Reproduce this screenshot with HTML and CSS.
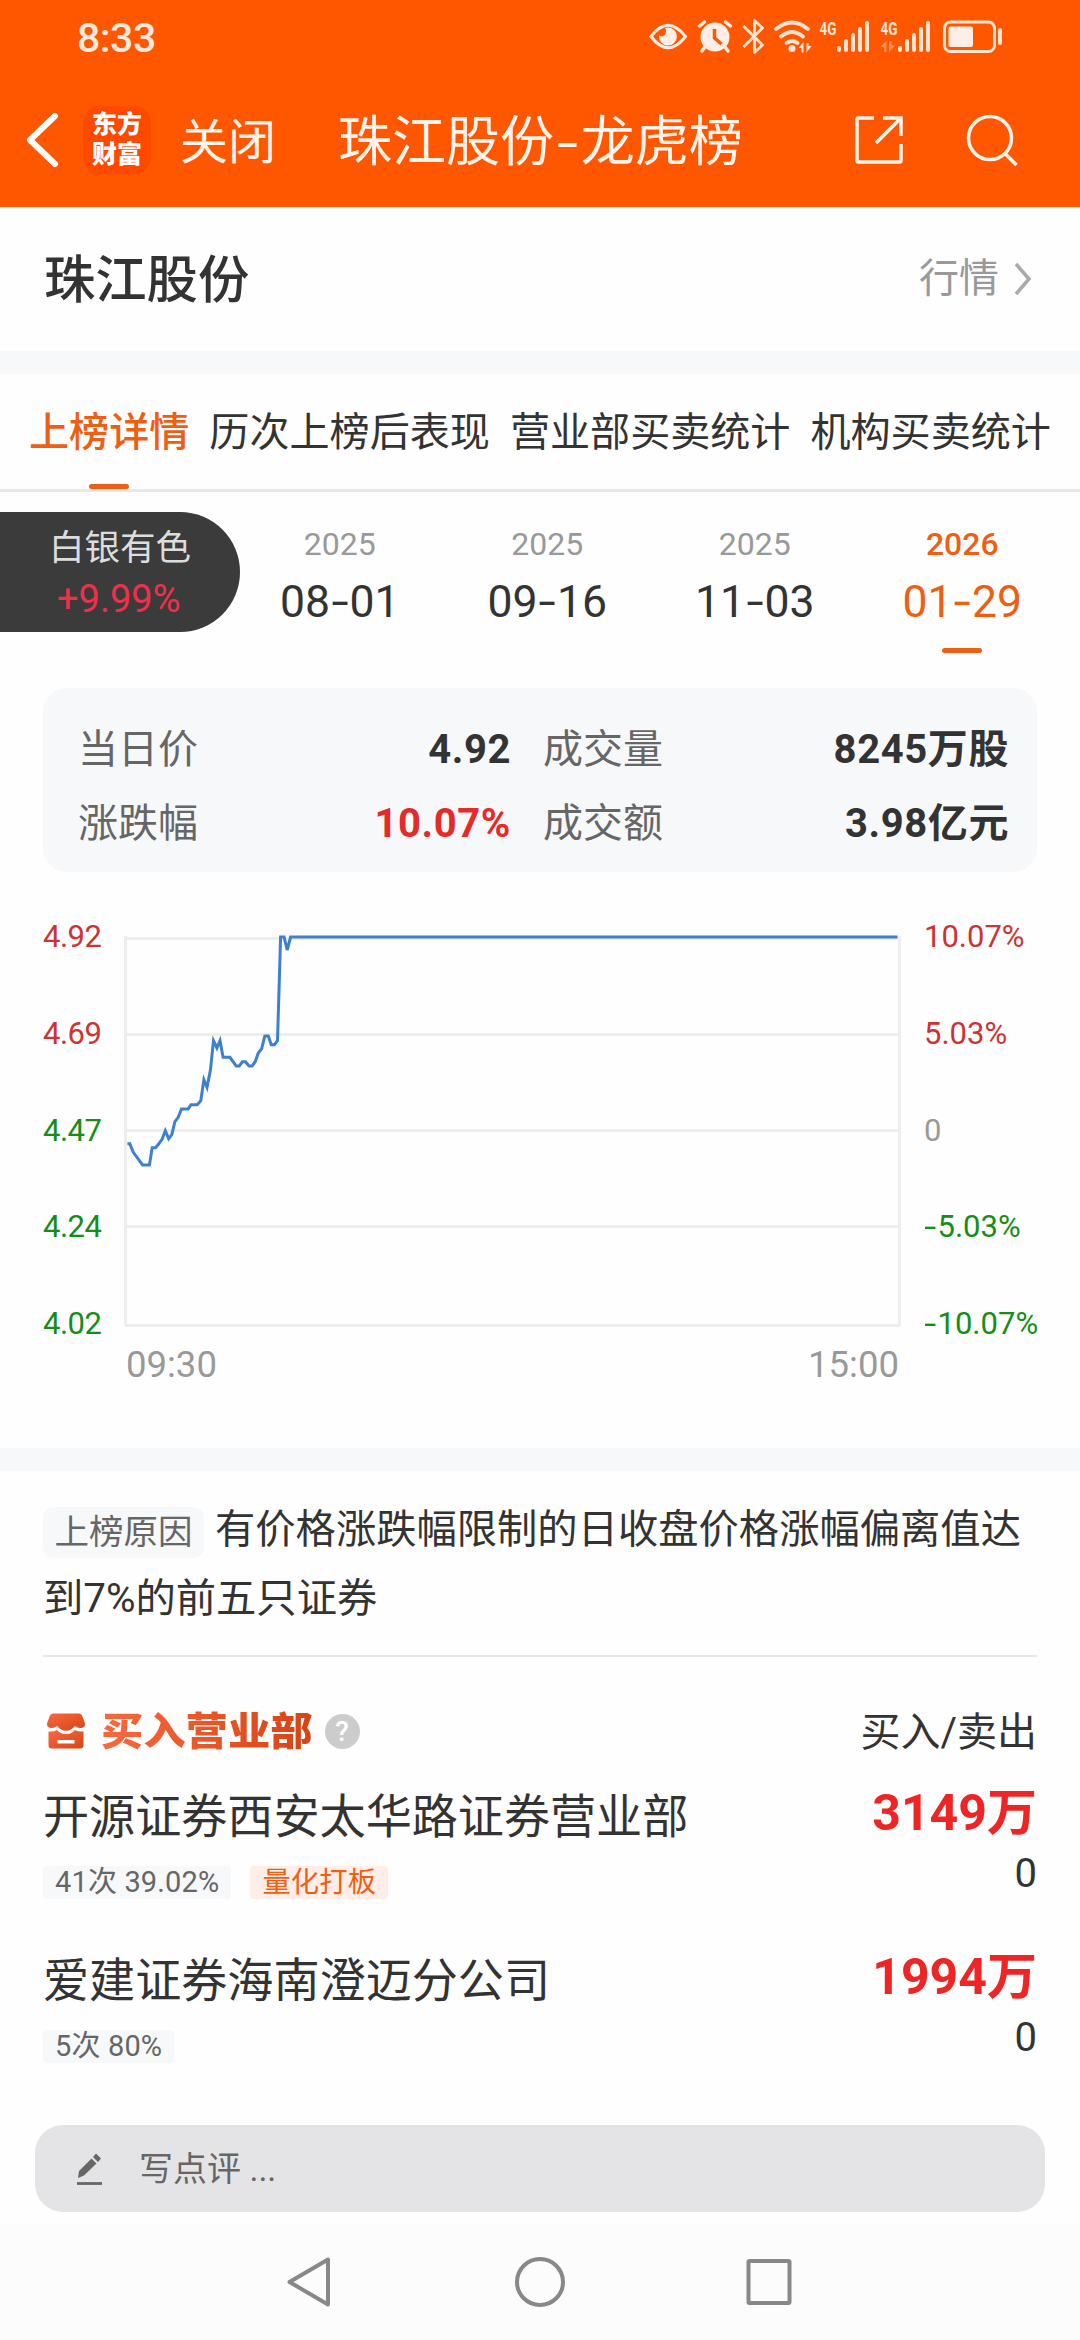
FILE: index.html
```html
<!DOCTYPE html>
<html lang="zh-CN">
<head>
  <meta charset="UTF-8" />
  <meta name="viewport" content="width=device-width, initial-scale=1.0"/>
  <title>珠江股份-龙虎榜</title>
  <link rel="stylesheet" href="styles.css">
</head>
<body>

  <header class="header">
    <div class="status-bar">
      <span class="time">8:33</span>
      <svg class="status-icons" viewBox="645 15 360 42" width="360" height="42">
        <!-- eye -->
        <path d="M650 36.500Q667 14 684.500 36.500Q667 59 650 36.500Z" fill="none" stroke="#ffeee5" stroke-width="3"/>
        <path d="M667 27.500a9 9 0 1 1-9 8c3 2 7 0 7-4 0-2-.5-3-1-3.500z" fill="#ffeee5"/>
        <!-- alarm -->
        <circle cx="714" cy="37" r="14.500" fill="#ffeee5"/>
        <path d="M698.500 26l5-4M729.500 26l-5-4M704 47l-3 4M724 47l3 4" stroke="#ffeee5" stroke-width="3.500" stroke-linecap="round"/>
        <path d="M713.500 29v9l7 6" fill="none" stroke="#ff5600" stroke-width="3.500"/>
        <!-- bluetooth -->
        <path d="M742.500 26l19 19-8 7.500V20.500l8 7.500-19 19" fill="none" stroke="#ffe4d2" stroke-width="2.800" stroke-linejoin="round"/>
        <!-- wifi -->
        <path d="M775 29q16-13 32 0M780 36.500q11-9 22 0M785.500 43q5.500-4 11 0" fill="none" stroke="#ffe4d2" stroke-width="3.800" stroke-linecap="round"/>
        <circle cx="791" cy="48.500" r="3.500" fill="#ffe4d2"/>
        <path d="M797.500 48l5-6v10.500h-2V48zM810.500 46l-5 6.500V43h2v3z" fill="#ffe4d2"/>
        <!-- signal 1 -->
        <text x="818.500" y="35" class="net" textLength="17" lengthAdjust="spacingAndGlyphs">4G</text>
        <path d="M838 48v2M845 41v9M852 35v15M859 29v21M866 23v27" stroke="#ffe4d2" stroke-width="4" stroke-linecap="round"/>
        <!-- signal 2 -->
        <text x="879.500" y="35" class="net" textLength="17" lengthAdjust="spacingAndGlyphs">4G</text>
        <path d="M879.500 47l6-6.500V52h-2.500v-5zM894 45.500l-6 6.500V41h2.500v4.500z" fill="#ff9360"/>
        <path d="M899 48v2M906 41v9M913 35v15M920 29v21M927 23v27" stroke="#ffe4d2" stroke-width="4" stroke-linecap="round"/>
        <!-- battery -->
        <rect x="943.500" y="22" width="50" height="29.500" rx="6" fill="none" stroke="#ffe4d2" stroke-width="3"/>
        <rect x="947.500" y="26.500" width="24.500" height="20.500" rx="2" fill="#ffeee5"/>
        <path d="M999 30v13" stroke="#ffe4d2" stroke-width="4" stroke-linecap="round"/>
      </svg>
    </div>
    <div class="title-bar">
      <svg class="back" viewBox="0 0 36 56" width="36" height="56">
        <path d="M30 4L5 28l25 24" fill="none" stroke="#fff" stroke-width="6" stroke-linecap="round" stroke-linejoin="round"/>
      </svg>
      <div class="logo"><span>东方</span><span>财富</span></div>
      <span class="close">关闭</span>
      <h1 class="title">珠江股份<i class="dash">-</i>龙虎榜</h1>
      <svg class="share" viewBox="0 0 50 50" width="50" height="50" fill="none" stroke="#fff3ec" stroke-width="3.500">
        <path d="M20 3H4.500Q3 3 3 4.500V45.500Q3 47 4.500 47H45.500Q47 47 47 45.500V29M29 3h18v18M47 3L22 28"/>
      </svg>
      <svg class="search" viewBox="0 0 54 54" width="54" height="54" fill="none" stroke="#fff3ec" stroke-width="3.500">
        <circle cx="24" cy="25" r="21.500"/>
        <path d="M38.500 40l12 12"/>
      </svg>
    </div>
  </header>

  <section class="stock">
    <h2>珠江股份</h2>
    <a class="quote">行情
      <svg viewBox="0 0 20 34" width="20" height="34"><path d="M3 2l13 15L3 32" fill="none" stroke="#aaa" stroke-width="3.500"/></svg>
    </a>
  </section>

  <div class="divider"></div>

  <nav class="tabs">
    <a class="tab active">上榜详情</a>
    <a class="tab">历次上榜后表现</a>
    <a class="tab">营业部买卖统计</a>
    <a class="tab">机构买卖统计</a>
  </nav>

  <section class="dates">
    <div class="floating">
      <span class="floating-name">白银有色</span>
      <span class="floating-rate">+9.99%</span>
    </div>
    <div class="date"><small>2025</small><b>08<i class="dash">-</i>01</b></div>
    <div class="date"><small>2025</small><b>09<i class="dash">-</i>16</b></div>
    <div class="date"><small>2025</small><b>11<i class="dash">-</i>03</b></div>
    <div class="date active"><small>2026</small><b>01<i class="dash">-</i>29</b></div>
  </section>

  <section class="summary">
    <div class="item"><span>当日价</span><b>4.92</b></div>
    <div class="item"><span>成交量</span><b>8245万股</b></div>
    <div class="item"><span>涨跌幅</span><b class="red">10.07%</b></div>
    <div class="item"><span>成交额</span><b>3.98亿元</b></div>
  </section>

  <section class="chart">
    <div class="axis price">
      <span class="up">4.92</span>
      <span class="up">4.69</span>
      <span class="down">4.47</span>
      <span class="down">4.24</span>
      <span class="down">4.02</span>
    </div>
    <div class="plot">
      <svg viewBox="0 0 777 394" width="777" height="394" fill="none">
        <path d="M1.500 2V391.500M775.500 2V391.500M1 4.500H776M1 100.500H776M1 196.500H776M1 292.500H776M1 391.500H776" stroke="#ededed" stroke-width="3"/>
        <polyline stroke="#3c80cf" stroke-width="3" points="3.400,209.700 5.800,209.700 9.300,218.300 18.600,231 25.400,231 28.200,213.700 31.600,213.700 34.400,210.300 38.200,205 41.300,196.700 44.700,204.700 47.800,200.700 50.900,187.700 54,183.700 57.500,175 64,175 67.100,170.700 73.300,170.700 76.800,166.700 79.900,145.700 83,153.300 86.400,136.300 89.500,106.700 92.900,114 96,106.700 99.100,123.300 106,123.300 112.200,132 115.300,132 118.400,127.700 121.500,127.700 125,132 128.100,132 131.200,127.700 134.300,119 137.700,114.700 140.800,102 144.300,102 147.300,110.700 150.500,110.700 153.500,106.700 156.600,3 160.100,3 163.200,16 166.600,3 773.500,3"/>
      </svg>
      <div class="times"><span>09:30</span><span>15:00</span></div>
    </div>
    <div class="axis percent">
      <span class="up">10.07%</span>
      <span class="up">5.03%</span>
      <span class="flat">0</span>
      <span class="down"><i class="dash">-</i>5.03%</span>
      <span class="down"><i class="dash">-</i>10.07%</span>
    </div>
  </section>

  <div class="divider"></div>

  <section class="detail">
    <p class="reason"><span class="reason-tag">上榜原因</span>有价格涨跌幅限制的日收盘价格涨幅偏离值达到7%的前五只证券</p>

    <div class="list-head">
      <svg class="shop" viewBox="0 0 40 36" width="40" height="36">
        <defs>
          <linearGradient id="shop" x1="0" y1="0" x2="1" y2="1">
            <stop offset="0" stop-color="#f76a45"/>
            <stop offset="1" stop-color="#d94312"/>
          </linearGradient>
        </defs>
        <path d="M7 .5H33Q35.500 .5 36.300 3L39 10.500Q39.500 14 35.500 15Q32 15.500 29 13Q24 18.500 20 17.500Q16 18.500 11 13Q8 15.500 4.500 15Q.5 14 1 10.500L3.700 3Q4.500 .5 7 .5Z" fill="url(#shop)"/>
        <path d="M2.500 18.500Q8 19 11 17Q15 21.500 20 21Q25 21.500 29 17Q32 19 37.500 18.500V32Q37.500 35.500 34 35.500H6Q2.500 35.500 2.500 32ZM11.500 27v3.500h17V27z" fill="url(#shop)" fill-rule="evenodd"/>
      </svg>
      <h3>买入营业部</h3>
      <span class="help">?</span>
      <span class="head-right">买入/卖出</span>
    </div>

    <div class="row">
      <div class="row-left">
        <div class="name">开源证券西安太华路证券营业部</div>
        <div class="tags"><span class="tag">41次 39.02%</span><span class="tag hot">量化打板</span></div>
      </div>
      <div class="row-right">
        <span class="buy">3149万</span>
        <span class="sell">0</span>
      </div>
    </div>
    <div class="row">
      <div class="row-left">
        <div class="name">爱建证券海南澄迈分公司</div>
        <div class="tags"><span class="tag">5次 80%</span></div>
      </div>
      <div class="row-right">
        <span class="buy">1994万</span>
        <span class="sell">0</span>
      </div>
    </div>
  </section>

  <div class="comment">
    <svg viewBox="0 0 28 34" width="28" height="34">
      <path d="M2 26l1-7L15.500 6.500l5 5L8 23.500zM17 5l3-3.500 5 5L22 10z" fill="#666"/>
      <path d="M1 31.500h25" stroke="#666" stroke-width="2.800"/>
    </svg>
    <span>写点评 ...</span>
  </div>

  <footer class="sys-nav">
    <svg viewBox="280 2252 520 60" width="520" height="60" fill="none" stroke="#888" stroke-width="4" stroke-linejoin="round">
      <path d="M328 2259.500V2304.500L289.500 2282Z"/>
      <circle cx="540" cy="2282" r="23"/>
      <rect x="748.500" y="2261" width="41" height="42" rx="1"/>
    </svg>
  </footer>

</body>
</html>
```
FILE: styles.css
```css
* {
  box-sizing: border-box;
}
body {
  margin: 0;
  width: 1080px;
  height: 2340px;
  overflow: hidden;
  display: flex;
  flex-direction: column;
  background: #fefefe;
  color: #333;
  font-family: Roboto, "Noto Sans CJK SC", sans-serif;
  font-size: 40px;
  line-height: 1;
}
h1, h2, h3, p {
  margin: 0;
}
.dash {
  display: inline-block;
  font-style: normal;
  transform: scaleX(1.4);
  margin: 0 0.08em;
}

/* header */
.header {
  height: 207px;
  flex: none;
  background: #ff5600;
  color: #fff3ec;
}
.status-bar {
  display: flex;
  justify-content: space-between;
  padding: 15px 74px 0 77px;
  height: 78px;
}
.time {
  font-size: 41px;
  line-height: 47px;
  font-weight: 500;
  color: #ffe9dd;
  letter-spacing: -0.5px;
}
.net {
  font-size: 19px;
  font-weight: 700;
  fill: #ffe4d2;
}
.title-bar {
  display: flex;
  align-items: center;
  height: 124px;
  padding: 0 60px 0 25px;
}
.logo {
  width: 68px;
  height: 68px;
  margin-left: 22px;
  border-radius: 17px;
  background: #ff4800;
  color: #fff;
  display: flex;
  flex-direction: column;
  align-items: center;
  justify-content: center;
  font-size: 25px;
  font-weight: 900;
  line-height: 30px;
}
.close {
  margin-left: 29px;
  padding-top: 5px;
  font-size: 48px;
  line-height: 60px;
}
.title {
  margin-left: 62px;
  padding-top: 6px;
  width: 402px;
  font-size: 54px;
  line-height: 64px;
  font-weight: 400;
  white-space: nowrap;
}
.title .dash {
  margin: 0 0.11em;
}
.share {
  margin-left: 114px;
}
.search {
  margin-left: auto;
  flex: none;
}

/* stock name */
.stock {
  height: 144px;
  flex: none;
  display: flex;
  align-items: center;
  justify-content: space-between;
  padding: 0 47px 0 44px;
}
.stock h2 {
  padding-top: 3px;
  font-size: 51.3px;
  line-height: 60px;
  font-weight: 500;
}
.quote {
  display: flex;
  align-items: center;
  gap: 14px;
  color: #999;
}
.divider {
  height: 23px;
  flex: none;
  background: #f7f8fa;
}

/* tabs */
.tabs {
  height: 118px;
  flex: none;
  display: flex;
  gap: 20px;
  padding-left: 29px;
  border-bottom: 3px solid #e8e8e8;
}
.tab {
  position: relative;
  font-size: 40.1px;
  line-height: 117px;
  white-space: nowrap;
}
.tab.active {
  color: #ee5f13;
  font-weight: 500;
}
.tab.active::after,
.date.active::after {
  content: "";
  position: absolute;
  left: 50%;
  bottom: 0;
  width: 40px;
  height: 5px;
  margin-left: -20px;
  border-radius: 3px;
  background: #ee5f13;
}

/* dates */
.dates {
  position: relative;
  height: 196px;
  flex: none;
  display: grid;
  grid-template-columns: repeat(4, 207.5px);
  padding-left: 236px;
}
.date {
  position: relative;
  height: 161px;
  display: flex;
  flex-direction: column;
  align-items: center;
  padding-top: 31px;
}
.date small {
  font-size: 32px;
  line-height: 42px;
  color: #999;
}
.date b {
  margin-top: 10px;
  font-size: 44.5px;
  line-height: 54px;
  font-weight: 400;
}
.date.active small,
.date.active b {
  color: #ee5f13;
}
.date.active small {
  font-weight: 500;
}
.floating {
  position: absolute;
  left: 0;
  top: 20px;
  width: 240px;
  height: 120px;
  padding: 11px 0 0 49px;
  border-radius: 0 60px 60px 0;
  background: #3b3b3b;
}
.floating span {
  display: block;
}
.floating-name {
  font-size: 35.5px;
  line-height: 50px;
  color: #ddd;
}
.floating-rate {
  margin-left: 8px;
  font-size: 38px;
  line-height: 52px;
  color: #f0304a;
}

/* summary */
.summary {
  height: 184px;
  flex: none;
  margin: 0 43px;
  padding: 25px 28px 0 35px;
  border-radius: 24px;
  background: #f7f8fa;
  display: grid;
  grid-template-columns: 433px 466px;
  grid-auto-rows: 74px;
  column-gap: 32px;
}
.item {
  display: flex;
  justify-content: space-between;
  align-items: center;
}
.item span {
  color: #666;
}
.item b {
  font-weight: 700;
  letter-spacing: 0.6px;
}
.item .red {
  color: #e62a2a;
}

/* chart */
.chart {
  height: 576px;
  flex: none;
  display: flex;
  padding: 62px 0 0 43px;
}
.axis {
  display: flex;
  flex-direction: column;
  justify-content: space-between;
  height: 427px;
  margin-top: -17px;
  font-size: 31px;
  line-height: 40px;
  white-space: nowrap;
}
.price {
  width: 81px;
  letter-spacing: -0.5px;
}
.percent {
  margin-left: 23px;
}
.up {
  color: #cc3333;
}
.down {
  color: #168d16;
}
.flat {
  color: #999;
}
.plot svg {
  display: block;
}
.times {
  display: flex;
  justify-content: space-between;
  padding: 14px 2px 0 2px;
  font-size: 36.5px;
  line-height: 46px;
  color: #999;
}

/* detail */
.detail {
  flex: none;
  margin: 0 43px;
}
.reason {
  height: 186px;
  padding-top: 24px;
  border-bottom: 2px solid #e6e6e6;
  font-size: 40.3px;
  line-height: 69px;
}
.reason-tag {
  display: inline-block;
  width: 161px;
  height: 51px;
  margin-right: 11px;
  border-radius: 10px;
  background: #f7f8fa;
  color: #666;
  font-size: 34.5px;
  line-height: 51px;
  text-align: center;
  vertical-align: -1px;
}
.list-head {
  display: flex;
  align-items: center;
  height: 48px;
  margin-top: 50px;
}
.shop {
  margin-left: 3px;
}
.list-head h3 {
  margin-left: 15px;
  padding-top: 2px;
  font-size: 42.3px;
  line-height: 48px;
  font-weight: 900;
  transform: scaleY(0.9);
  color: transparent;
  background: linear-gradient(90deg, #f7693f, #d94312);
  -webkit-background-clip: text;
  background-clip: text;
}
.help {
  width: 35px;
  height: 35px;
  margin-left: 12px;
  border-radius: 50%;
  background: #ccc;
  color: #fff;
  font-size: 28px;
  line-height: 36px;
  font-weight: 500;
  text-align: center;
}
.head-right {
  margin-left: auto;
  padding-top: 3px;
}
.row {
  display: flex;
  justify-content: space-between;
  height: 164px;
  padding-top: 28px;
}
.name {
  padding-top: 1px;
  font-size: 46.1px;
  line-height: 66px;
}
.tags {
  display: flex;
  gap: 19px;
  margin-top: 16px;
}
.tag {
  height: 33px;
  padding: 0 12px;
  border-radius: 4px;
  background: #f7f8fa;
  color: #666;
  font-size: 29px;
  line-height: 33px;
  letter-spacing: 0.15px;
}
.tag.hot {
  background: #feeee7;
  color: #ee5f13;
  font-size: 28.3px;
}
.row-right {
  display: flex;
  flex-direction: column;
  align-items: flex-end;
}
.buy {
  font-size: 50px;
  line-height: 60px;
  font-weight: 700;
  color: #ee2524;
}
.sell {
  margin-top: 6px;
  line-height: 50px;
}

/* bottom */
.comment {
  height: 87px;
  flex: none;
  margin: auto 35px 12px;
  padding-left: 41px;
  border-radius: 28px;
  background: #e4e4e6;
  color: #666;
  display: flex;
  align-items: center;
  gap: 35px;
  font-size: 34px;
}
.sys-nav {
  height: 116px;
  flex: none;
  padding: 28px 0 0 280px;
  background: #fcfcfc;
}
```
